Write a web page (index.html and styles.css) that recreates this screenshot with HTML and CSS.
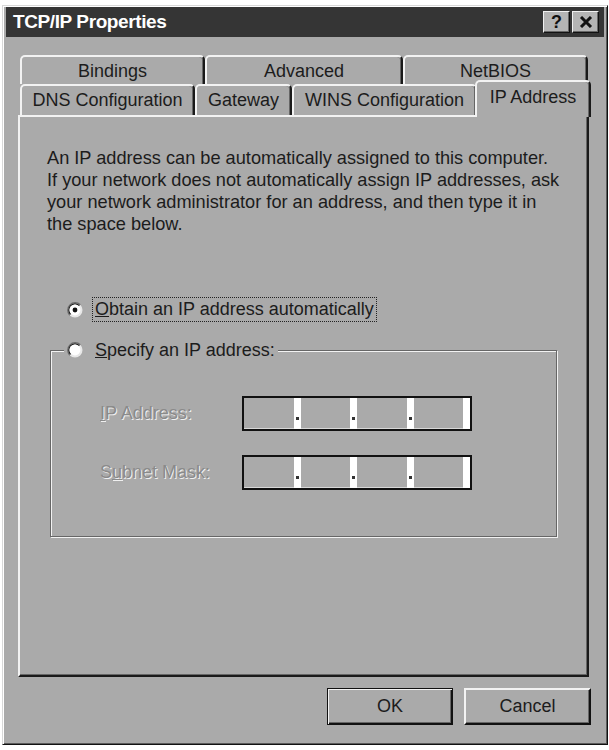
FILE: index.html
```html
<!DOCTYPE html>
<html lang="en">
<head>
    <meta charset="UTF-8">
    <title>TCP/IP Properties</title>
    <link rel="stylesheet" href="styles.css">
</head>
<body>
    <div class="window">
        <div class="titlebar">
            <span class="title">TCP/IP Properties</span>
            <div class="title-buttons">
                <span class="tbtn help">?</span>
                <span class="tbtn close">
                    <svg width="14" height="12" viewBox="0 0 14 12"><path d="M2 1 L12 11 M12 1 L2 11" stroke="#111" stroke-width="3"/></svg>
                </span>
            </div>
        </div>
        <div class="content">
            <div class="tabs">
                <div class="tab-row back">
                    <div class="tab w-bind">Bindings</div>
                    <div class="tab w-adv">Advanced</div>
                    <div class="tab w-net">NetBIOS</div>
                </div>
                <div class="tab-row front">
                    <div class="tab w-dns">DNS Configuration</div>
                    <div class="tab w-gw">Gateway</div>
                    <div class="tab w-wins">WINS Configuration</div>
                    <div class="tab w-ip selected">IP Address</div>
                </div>
            </div>
            <div class="panel">
                <p class="intro">An IP address can be automatically assigned to this computer.<br>If your network does not automatically assign IP addresses, ask<br>your network administrator for an address, and then type it in<br>the space below.</p>

                <div class="option">
                    <svg class="radio" width="16" height="16" viewBox="0 0 16 16">
                        <circle cx="8" cy="8" r="7.5" fill="#e8e8e8"/>
                        <path d="M2.7 13.3 A7.5 7.5 0 0 1 13.3 2.7" fill="none" stroke="#6a6a6a" stroke-width="1.2"/>
                        <path d="M3.6 12.4 A6.2 6.2 0 0 1 12.4 3.6" fill="none" stroke="#1e1e1e" stroke-width="1.2"/>
                        <circle cx="8" cy="8" r="5.4" fill="#fff"/>
                        <circle cx="8" cy="8" r="2.4" fill="#111"/>
                    </svg>
                    <span class="focus"><u>O</u>btain an IP address automatically</span>
                </div>

                <fieldset class="group">
                    <legend class="option legend">
                        <svg class="radio" width="16" height="16" viewBox="0 0 16 16">
                            <circle cx="8" cy="8" r="7.5" fill="#e8e8e8"/>
                            <path d="M2.7 13.3 A7.5 7.5 0 0 1 13.3 2.7" fill="none" stroke="#6a6a6a" stroke-width="1.2"/>
                            <path d="M3.6 12.4 A6.2 6.2 0 0 1 12.4 3.6" fill="none" stroke="#1e1e1e" stroke-width="1.2"/>
                            <circle cx="8" cy="8" r="5.4" fill="#fff"/>
                        </svg>
                        <span class="label"><u>S</u>pecify an IP address:</span>
                    </legend>
                    <div class="fields">
                        <span class="disabled"><u>I</u>P Address:</span>
                        <div class="ipfield">
                            <span class="seg"><span class="sep dot"></span></span>
                            <span class="seg"><span class="sep dot"></span></span>
                            <span class="seg"><span class="sep dot"></span></span>
                            <span class="seg"><span class="sep"></span></span>
                        </div>
                        <span class="disabled">S<u>u</u>bnet Mask:</span>
                        <div class="ipfield">
                            <span class="seg"><span class="sep dot"></span></span>
                            <span class="seg"><span class="sep dot"></span></span>
                            <span class="seg"><span class="sep dot"></span></span>
                            <span class="seg"><span class="sep"></span></span>
                        </div>
                    </div>
                </fieldset>
            </div>
            <div class="buttons">
                <div class="button default">OK</div>
                <div class="button">Cancel</div>
            </div>
        </div>
    </div>
</body>
</html>
```

FILE: styles.css
```css
* {
    box-sizing: border-box;
}
body {
    margin: 0;
    background: #fff;
    font-family: "Liberation Sans", Arial, sans-serif;
    font-size: 18px;
    color: #1c1c1c;
}
.window {
    margin: 5px 0 0 2px;
    width: 606px;
    height: 740px;
    background: #aaa;
    border: 1px solid;
    border-color: #d8d8d8 #111 #111 #d8d8d8;
    box-shadow: inset 1px 1px 0 #fff, inset -1px -1px 0 #5a5a5a;
    padding: 1px 3px 3px;
}
.titlebar {
    height: 30px;
    background: #353535;
    display: flex;
    align-items: center;
    padding: 0 5px 0 7px;
}
.title {
    flex: 1;
    color: #fff;
    font-weight: bold;
    font-size: 19px;
    letter-spacing: -0.4px;
}
.title-buttons {
    display: flex;
    gap: 2px;
}
.tbtn {
    width: 27px;
    height: 22px;
    display: flex;
    align-items: center;
    justify-content: center;
    background: #b4b4b4;
    border: 1px solid;
    border-color: #f0f0f0 #111 #111 #f0f0f0;
    box-shadow: inset -1px -1px 0 #666;
    font-weight: bold;
    font-size: 18px;
    color: #111;
}
.content {
    padding: 18px 0 0 12px;
}

/* tabs */
.tabs {
    margin-left: 2px;
}
.tab-row {
    display: flex;
    align-items: flex-start;
}
.tab {
    display: flex;
    align-items: center;
    justify-content: center;
    background: #aaa;
    border: 2px solid;
    border-bottom: 0;
    border-color: #f2f2f2 #1a1a1a transparent #f2f2f2;
    border-radius: 5px 5px 0 0;
    box-shadow: inset -1px 0 0 #666;
    white-space: nowrap;
}
.back .tab {
    height: 29px;
    padding-top: 2px;
}
.front .tab {
    height: 31px;
}
.w-bind { width: 185px; }
.w-adv { width: 198px; }
.w-net { width: 185px; }
.w-dns { width: 175px; }
.w-gw { width: 97px; }
.w-wins { width: 185px; }
.w-ip { width: 112px; }
.front .tab.selected {
    position: relative;
    z-index: 2;
    width: 116px;
    height: 37px;
    margin: -4px -2px -2px -2px;
    padding-bottom: 4px;
}

/* panel */
.panel {
    width: 571px;
    height: 562px;
    border: 2px solid;
    border-color: #f2f2f2 #1a1a1a #1a1a1a #f2f2f2;
    box-shadow: inset -1px -1px 0 #666;
    padding: 30px 0 0 27px;
}
.intro {
    margin: 0;
    font-size: 18.2px;
    line-height: 22px;
    white-space: nowrap;
}
.option {
    display: flex;
    align-items: center;
    height: 25px;
    margin: 62px 0 0 20px;
}
.radio {
    flex-shrink: 0;
    margin-right: 9px;
}
.focus {
    border: 1px dotted #222;
    padding: 0 2px;
    line-height: 23px;
}
.group {
    margin: 16px 0 0 3px;
    padding: 0;
    width: 507px;
    height: 199px;
    border: 1px solid #666;
    box-shadow: 1px 1px 0 #f2f2f2, inset 1px 1px 0 #f2f2f2;
}
.legend {
    margin: 0 0 0 13px;
    padding: 0 3px;
    height: 24px;
    background: #aaa;
}
.legend .radio {
    margin-right: 12px;
}
.fields {
    display: grid;
    grid-template-columns: 142px 230px;
    row-gap: 24px;
    align-items: center;
    padding: 34px 0 0 49px;
}
.disabled {
    color: #8a8a8a;
    text-shadow: 1px 1px 0 #f0f0f0;
}
.ipfield {
    display: flex;
    height: 35px;
    border: 2px solid #111;
    box-shadow: inset 0 -1px 0 #d8d8d8;
}
.seg {
    flex: 1;
    display: flex;
    justify-content: flex-end;
}
.sep {
    width: 7px;
    background: #fff;
    display: flex;
    align-items: flex-end;
    justify-content: center;
    padding-bottom: 9px;
}
.dot::after {
    content: "";
    width: 3px;
    height: 3px;
    background: #333;
}

/* buttons */
.buttons {
    display: flex;
    justify-content: flex-end;
    gap: 11px;
    width: 573px;
    margin-top: 11px;
}
.button {
    width: 127px;
    height: 37px;
    display: flex;
    align-items: center;
    justify-content: center;
    background: #aaa;
    border: 2px solid;
    border-color: #f2f2f2 #111 #111 #f2f2f2;
    box-shadow: inset -1px -1px 0 #666;
}
.button.default {
    width: 126px;
    border: 1px solid #111;
    box-shadow: inset 1px 1px 0 #f2f2f2, inset -1px -1px 0 #111, inset -2px -2px 0 #666;
}
```
